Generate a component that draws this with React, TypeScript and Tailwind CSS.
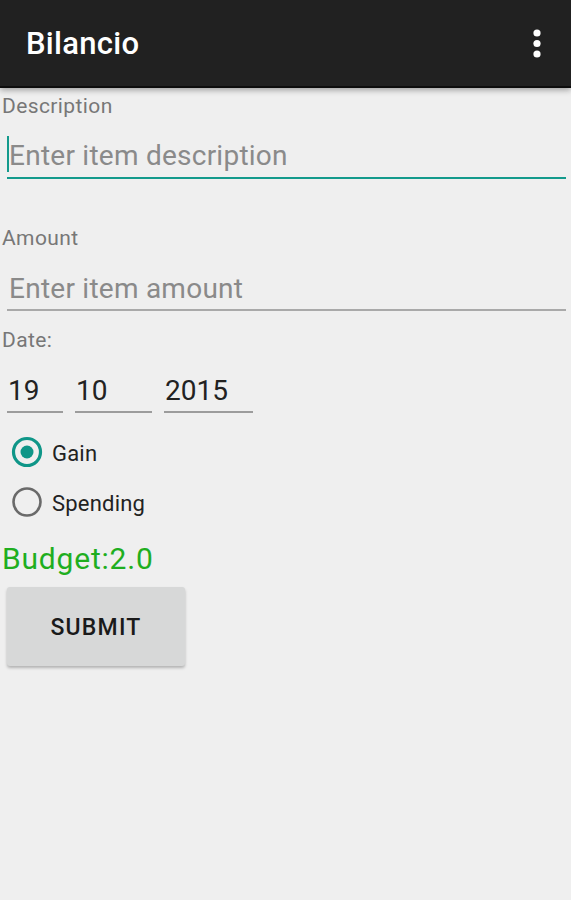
import React from "react";

export default function App() {
  const font = { fontFamily: "Roboto, 'Noto Sans', Arial, sans-serif" };
  return (
    <div className="w-[571px] h-[900px] bg-[#efefef] overflow-hidden" style={font}>
      {/* Toolbar */}
      <div className="relative z-10 h-[88px] bg-[#212121] border-b-2 border-[#0d0d0d] shadow-[0_2px_6px_rgba(0,0,0,0.35)] flex items-center justify-between pl-[26px] pr-[27px]">
        <span className="text-white text-[31px] font-medium leading-none tracking-[0.3px] pt-[1px]">Bilancio</span>
        <svg width="14" height="34" viewBox="0 0 14 34" className="mt-[1px]">
          <circle cx="7" cy="6" r="3.6" fill="#fff" />
          <circle cx="7" cy="16.5" r="3.6" fill="#fff" />
          <circle cx="7" cy="27" r="3.6" fill="#fff" />
        </svg>
      </div>

      {/* Description */}
      <div className="pt-[6px] pl-[2px] h-[30px] text-[21px] leading-[24px] tracking-[0.4px] text-[#777]">Description</div>
      <div className="ml-[7px] mr-[5px] pt-[20px] pb-[3px] border-b-2 border-[#139a8c]">
        <div className="flex items-center h-[36px]">
          <span className="inline-block w-[2px] h-[36px] bg-[#139a8c] -mt-[4px]" />
          <span className="text-[28px] leading-[36px] tracking-[0.25px] text-[#8a8a8a]">Enter item description</span>
        </div>
      </div>

      {/* Amount */}
      <div className="pt-[47px] pl-[2px] h-[71px] text-[21px] leading-[24px] tracking-[0.4px] text-[#777]">Amount</div>
      <div className="ml-[7px] mr-[5px] pt-[21px] pb-[2px] border-b-2 border-[#a9a9a9]">
        <div className="pl-[2px] text-[28px] leading-[36px] tracking-[0.25px] text-[#8a8a8a]">Enter item amount</div>
      </div>

      {/* Date */}
      <div className="pt-[17px] pl-[2px] h-[41px] text-[21px] leading-[24px] tracking-[0.4px] text-[#777]">Date:</div>
      <div className="flex pt-[21px] pl-[7px] gap-[12px]">
        <div className="w-[56px] pb-[2px] border-b-2 border-[#9c9c9c] text-[28px] leading-[36px] text-[#222] pl-[1px]">19</div>
        <div className="w-[77px] pb-[2px] border-b-2 border-[#9c9c9c] text-[28px] leading-[36px] text-[#222] pl-[1px]">10</div>
        <div className="w-[89px] pb-[2px] border-b-2 border-[#9c9c9c] text-[28px] leading-[36px] text-[#222] pl-[1px]">2015</div>
      </div>

      {/* Radios */}
      <div className="pt-[14px]">
        <div className="flex items-center h-[50px] pl-[11px]">
          <svg width="32" height="32" viewBox="0 0 32 32">
            <circle cx="16" cy="16" r="13.5" fill="none" stroke="#0f9688" strokeWidth="3.2" />
            <circle cx="16" cy="16" r="6.5" fill="#0f9688" />
          </svg>
          <span className="ml-[9px] text-[22px] leading-[26px] tracking-[0.2px] text-[#222] pt-[3px]">Gain</span>
        </div>
        <div className="flex items-center h-[50px] pl-[11px]">
          <svg width="32" height="32" viewBox="0 0 32 32">
            <circle cx="16" cy="16" r="13.5" fill="none" stroke="#6a6a6a" strokeWidth="2.6" />
          </svg>
          <span className="ml-[9px] text-[22px] leading-[26px] tracking-[0.2px] text-[#222] pt-[3px]">Spending</span>
        </div>
      </div>

      {/* Budget */}
      <div className="pt-[14px] pl-[2px] text-[30px] leading-[36px] tracking-[0.8px] text-[#1fae1f]">Budget:2.0</div>

      {/* Submit */}
      <div className="pt-[10px] pl-[7px]">
        <button className="w-[178px] h-[79px] bg-[#d7d8d8] rounded-[3px] shadow-[0_2px_3px_rgba(0,0,0,0.25)] flex items-center justify-center pt-[3px] text-[23px] font-medium text-[#1a1a1a] tracking-[1.2px]">
          SUBMIT
        </button>
      </div>
    </div>
  );
}
